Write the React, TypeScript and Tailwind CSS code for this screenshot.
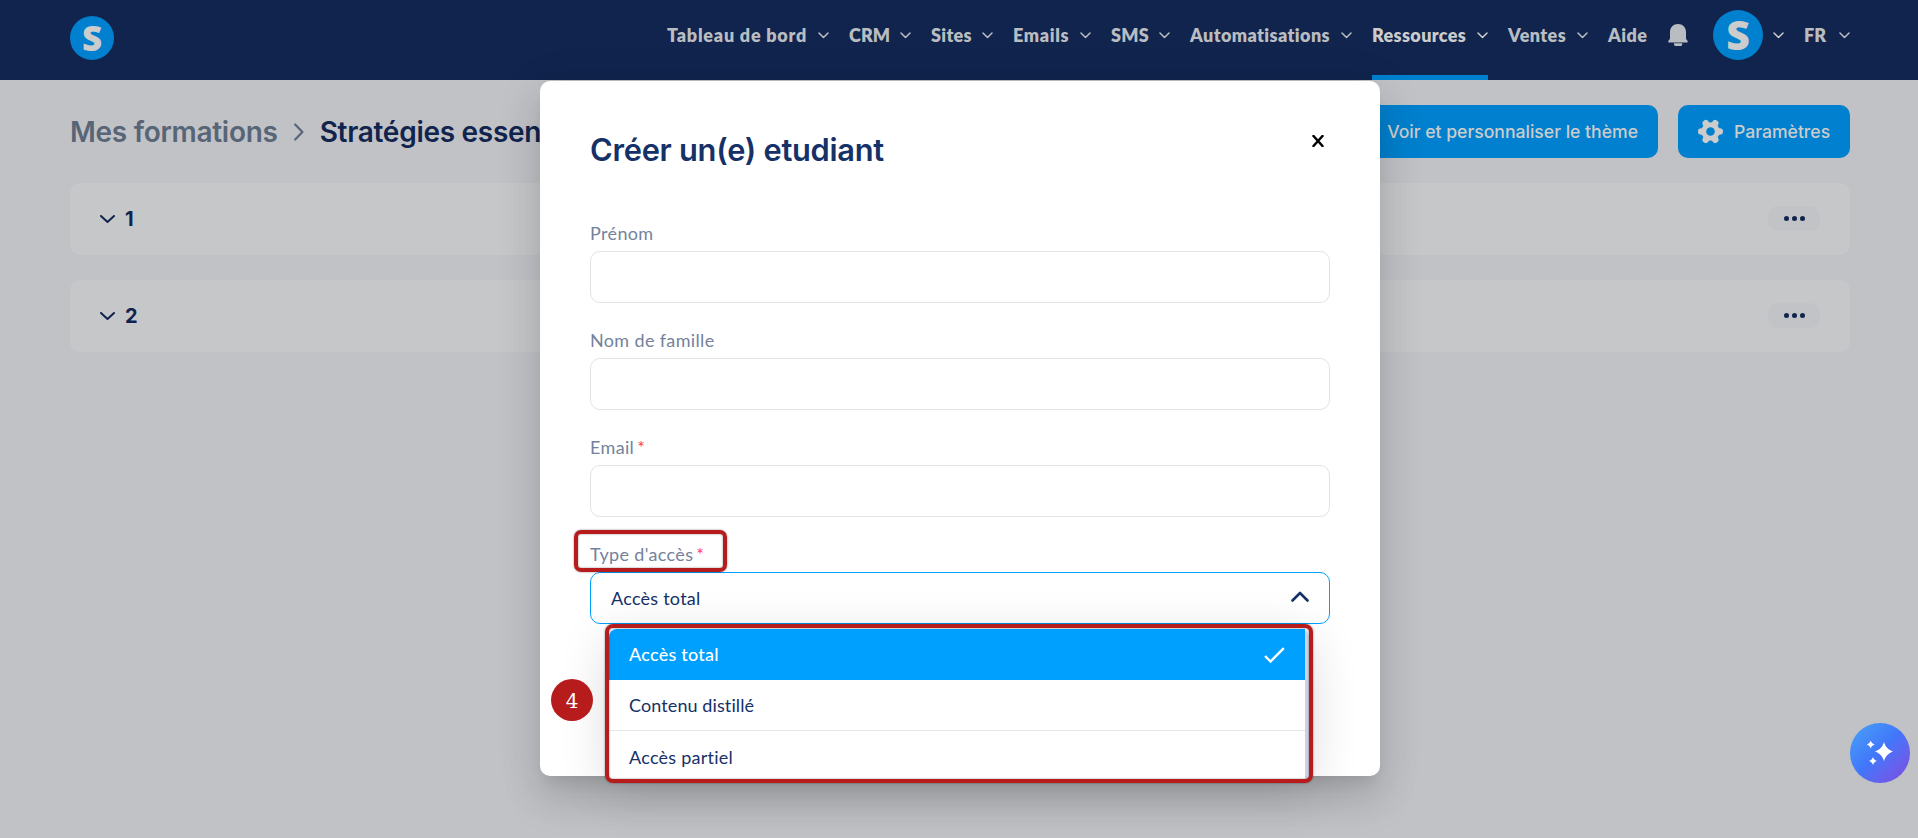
import type { ReactNode } from "react";
import clsx from "clsx";

const menu = [
  { label: "Tableau de bord", size: "w-[141px] tracking-[0.75px]" },
  { label: "CRM", size: "w-[41px] tracking-[0.1px]" },
  { label: "Sites", size: "w-[41px] tracking-[0.3px]" },
  { label: "Emails", size: "w-[57px] tracking-[0.65px]" },
  { label: "SMS", size: "w-[38px] tracking-[0.3px]" },
  { label: "Automatisations", size: "w-[141px] tracking-[0.4px]" },
  { label: "Ressources", size: "w-[95px] tracking-[0.35px]", active: true },
  { label: "Ventes", size: "w-[59px] tracking-[0.4px]" },
];

const modules = ["1", "2"];

const fields = [
  { label: "Prénom", required: false },
  { label: "Nom de famille", required: false },
  { label: "Email", required: true },
];

const NavChevron = () => (
  <svg className="h-[7px] w-[11px] shrink-0" viewBox="0 0 11 7" fill="none">
    <path
      d="M1 1l4.5 4.5L10 1"
      stroke="currentColor"
      strokeWidth="1.5"
      strokeLinecap="round"
      strokeLinejoin="round"
    />
  </svg>
);

const BellIcon = () => (
  <svg className="h-[22px] w-5" viewBox="0 0 20 22" fill="#b9bdc1">
    <path d="M10 0C5.400 0 2 3.400 2 8v6.200c0 1.500-1.800 2-1.800 3.600 0 .5.300.7.800.7h18c.5 0 .8-.2.800-.7 0-1.600-1.800-2.100-1.800-3.600V8c0-4.600-3.400-8-8-8z" />
    <path d="M6 19.300h8.200v1.200c0 .8-.6 1.400-1.400 1.400H7.400c-.8 0-1.400-.6-1.400-1.400z" />
  </svg>
);

const GearIcon = () => (
  <svg className="h-[25px] w-[25px]" viewBox="-12.5 -12.5 25 25">
    <g stroke="#cccccc" strokeWidth="6.6" strokeLinecap="round">
      <path d="M-9.200 0H9.200M-4.700-8.200L4.700 8.200M4.700-8.200L-4.700 8.200" />
    </g>
    <circle r="9.200" fill="#cccccc" />
    <circle r="4.300" fill="#0080ce" />
  </svg>
);

const SparklesIcon = () => (
  <svg className="h-[26px] w-[28px]" viewBox="0 0 28 26" fill="#fff">
    <path d="M18 2c1.600 5 3.700 7.400 9 9.600-5.300 2.200-7.400 4.600-9 9.600-1.600-5-3.700-7.400-9-9.600 5.300-2.200 7.400-4.600 9-9.600z" />
    <path d="M4.700.500c.8 2.200 1.700 3.100 3.900 4-2.200.9-3.100 1.800-3.900 4-.8-2.200-1.700-3.100-3.900-4 2.200-.9 3.100-1.800 3.900-4z" />
    <path d="M7 17c.8 2.200 1.700 3.100 3.900 4-2.200.9-3.100 1.800-3.900 4-.8-2.200-1.700-3.100-3.900-4 2.200-.9 3.100-1.800 3.900-4z" />
  </svg>
);

const FieldLabel = ({ children, required }: { children: ReactNode; required?: boolean }) => (
  <label className="flex h-[27px] items-center pt-0.5 font-[Lato,sans-serif] text-[18px] tracking-[0.35px] text-[#74829c]">
    {children}
    {required && <span className="ml-[3px] text-[18px] text-[#ff3860]">*</span>}
  </label>
);

const Header = () => (
  <header className="flex h-20 justify-between bg-[#11244d] pr-[68px] pl-[70px] font-[Lato,sans-serif] text-[18px] font-extrabold text-[#b9bdc1]">
    <div className="mt-[15.5px] flex h-11 w-11 items-center justify-center rounded-full bg-[#0080ce] pb-px font-['Open_Sans',sans-serif] text-[35px] leading-none font-extrabold text-[#cccccc]">
      S
    </div>
    <nav className="flex gap-5">
      {menu.map((item) => (
        <div
          key={item.label}
          className={clsx(
            "flex h-20 items-center gap-2.5 border-b-[5px] pb-[5px]",
            item.active ? "border-[#0080ce] text-[#cccccc]" : "border-transparent"
          )}
        >
          <span className={clsx("whitespace-nowrap", item.size)}>{item.label}</span>
          <NavChevron />
        </div>
      ))}
      <div className="flex h-20 w-10 items-center pb-2.5 tracking-[0.4px]">Aide</div>
      <div className="flex h-20 items-center pb-2.5">
        <BellIcon />
      </div>
      <div className="ml-[5px] flex h-20 items-center gap-2.5 pb-2.5 text-[#cccccc]">
        <div className="flex h-[50px] w-[50px] items-center justify-center rounded-full bg-[#0080ce] pb-px font-['Open_Sans',sans-serif] text-[41px] leading-none font-extrabold">
          S
        </div>
        <NavChevron />
      </div>
      <div className="flex h-20 items-center gap-3.5 pb-2.5">
        <span className="w-[21px]">FR</span>
        <NavChevron />
      </div>
    </nav>
  </header>
);

const Course = () => (
  <main className="flex flex-col gap-[25px] pt-[25px] pr-[68px] pl-[70px]">
    <div className="flex h-[53px] items-center justify-between">
      <div className="flex items-center gap-4 text-[28px] font-semibold tracking-[-0.28px] whitespace-nowrap text-[#11244d]">
        <span className="text-[#586577]">Mes formations</span>
        <svg className="h-[18px] w-2.5" viewBox="0 0 10 18" fill="none">
          <path d="M1.200 1.500l7.200 7.500-7.200 7.500" stroke="#586577" strokeWidth="2.200" strokeLinecap="round" strokeLinejoin="round" />
        </svg>
        <span>Stratégies essentielles</span>
      </div>
      <div className="flex gap-5 text-[17.6px] font-medium text-[#cccccc]">
        <button className="flex h-[53px] w-[310px] items-center justify-end rounded-[10px] bg-[#0080ce] pt-px pr-5">
          Voir et personnaliser le thème
        </button>
        <button className="flex h-[53px] w-[172px] items-center gap-[11px] rounded-[10px] bg-[#0080ce] pl-5">
          <GearIcon />
          <span className="pt-px">Paramètres</span>
        </button>
      </div>
    </div>
    {modules.map((name) => (
      <section key={name} className="flex h-[72px] items-center justify-between rounded-[10px] bg-[#c6c7c8] px-[30px] pb-px">
        <div className="flex items-center gap-2.5 text-[20px] font-bold text-[#11244d]">
          <svg className="h-2 w-[15px]" viewBox="0 0 15 8" fill="none">
            <path d="M1 1l6.500 6L14 1" stroke="currentColor" strokeWidth="2" strokeLinecap="round" strokeLinejoin="round" />
          </svg>
          {name}
        </div>
        <div className="flex h-[25px] w-[52px] items-center justify-center gap-[3px] rounded-[10px] bg-[#c1c3c6]">
          <i className="h-[5px] w-[5px] rounded-full bg-[#11244d]" />
          <i className="h-[5px] w-[5px] rounded-full bg-[#11244d]" />
          <i className="h-[5px] w-[5px] rounded-full bg-[#11244d]" />
        </div>
      </section>
    ))}
  </main>
);

const AccessSelect = () => (
  <div className="relative mt-[5px] h-[52px] rounded-[10px] border border-[#00a0ff] font-[Lato,sans-serif] text-[18px] tracking-[0.25px] text-[#153168]">
    <div className="flex h-[50px] items-center justify-between pr-5 pl-5">
      <span>Accès total</span>
      <svg className="mb-[3px] h-[11px] w-[18px]" viewBox="0 0 18 11" fill="none">
        <path d="M1.500 9.500L9 2l7.500 7.500" stroke="currentColor" strokeWidth="2.600" strokeLinecap="round" strokeLinejoin="round" />
      </svg>
    </div>
    <div className="absolute top-[56px] left-[18px] h-[150px] w-[700px] rounded-t-[8px] border-r-4 border-[#cdd3e3] bg-white shadow-[0_10px_50px_rgba(0,0,0,0.16)]">
      <div className="flex h-[51px] items-center justify-between rounded-tl-[8px] bg-[#00a0ff] pr-5 pl-5 text-white">
        <span className="font-medium">Accès total</span>
        <svg className="h-4 w-[21px]" viewBox="0 0 21 16" fill="none">
          <path d="M1 9l5.500 5.500L19.800 1.200" stroke="#fff" strokeWidth="2.400" />
        </svg>
      </div>
      <div className="flex h-[51px] items-center border-b border-[#e3e6ea] pl-5 tracking-[0.1px]">Contenu distillé</div>
      <div className="flex h-[51px] items-center pt-0.5 pl-5">Accès partiel</div>
    </div>
    {/* callouts */}
    <div className="absolute top-[-43px] left-[-17px] h-[42px] w-[153px] rounded-[7px] border-4 border-[#b71c1c] shadow-[0_0_2px_rgba(0,0,0,0.5),inset_0_0_2px_rgba(0,0,0,0.5)]" />
    <div className="absolute top-[51px] left-[14px] h-[159px] w-[708px] rounded-[8px] border-4 border-[#b71c1c] shadow-[0_0_2px_rgba(0,0,0,0.5),inset_0_0_2px_rgba(0,0,0,0.5)]" />
    <div className="absolute top-[106px] left-[-40px] flex h-[42px] w-[42px] items-center justify-center rounded-full bg-[#b71c1c] pt-0.5 font-['DejaVu_Serif',serif] text-[20px] leading-none tracking-normal text-white">
      4
    </div>
  </div>
);

const StudentModal = () => (
  <div className="absolute inset-0 flex justify-center pt-[81px] pl-[2px]">
    <div className="h-[695px] w-[840px] rounded-[10px] bg-white px-[50px] pt-[49px] shadow-[0_11px_15px_-7px_rgba(0,0,0,0.1),0_24px_38px_3px_rgba(0,0,0,0.1),0_9px_46px_8px_rgba(0,0,0,0.06)]">
      <div className="flex h-10 items-center justify-between">
        <h2 className="pt-px text-[30.8px] font-semibold tracking-[-0.27px] text-[#153168]">Créer un(e) etudiant</h2>
        <svg className="mr-1.5 mb-[18px] h-3 w-3" viewBox="0 0 12 12">
          <path d="M1.500 1l9 10M10.500 1l-9 10" stroke="#000" strokeWidth="2.500" strokeLinecap="round" />
        </svg>
      </div>
      <div className="mt-[49px] flex flex-col gap-[23px]">
        {fields.map((field) => (
          <div key={field.label}>
            <FieldLabel required={field.required}>{field.label}</FieldLabel>
            <div className="mt-[5px] h-[52px] rounded-[10px] border border-[#e0e3e8]" />
          </div>
        ))}
        <div>
          <FieldLabel required>Type d&#39;accès</FieldLabel>
          <AccessSelect />
        </div>
      </div>
    </div>
  </div>
);

const App = () => {
  return (
    <div className="relative h-[838px] w-full overflow-hidden bg-[#c1c2c6] font-[Inter,sans-serif]">
      <Header />
      <Course />
      <StudentModal />
      <button className="absolute right-2 bottom-[55px] flex h-[60px] w-[60px] items-center justify-center rounded-full bg-linear-135 from-[#4aa3f8] via-[#4275fa] to-[#7c48df]">
        <SparklesIcon />
      </button>
    </div>
  );
};

export default App;
